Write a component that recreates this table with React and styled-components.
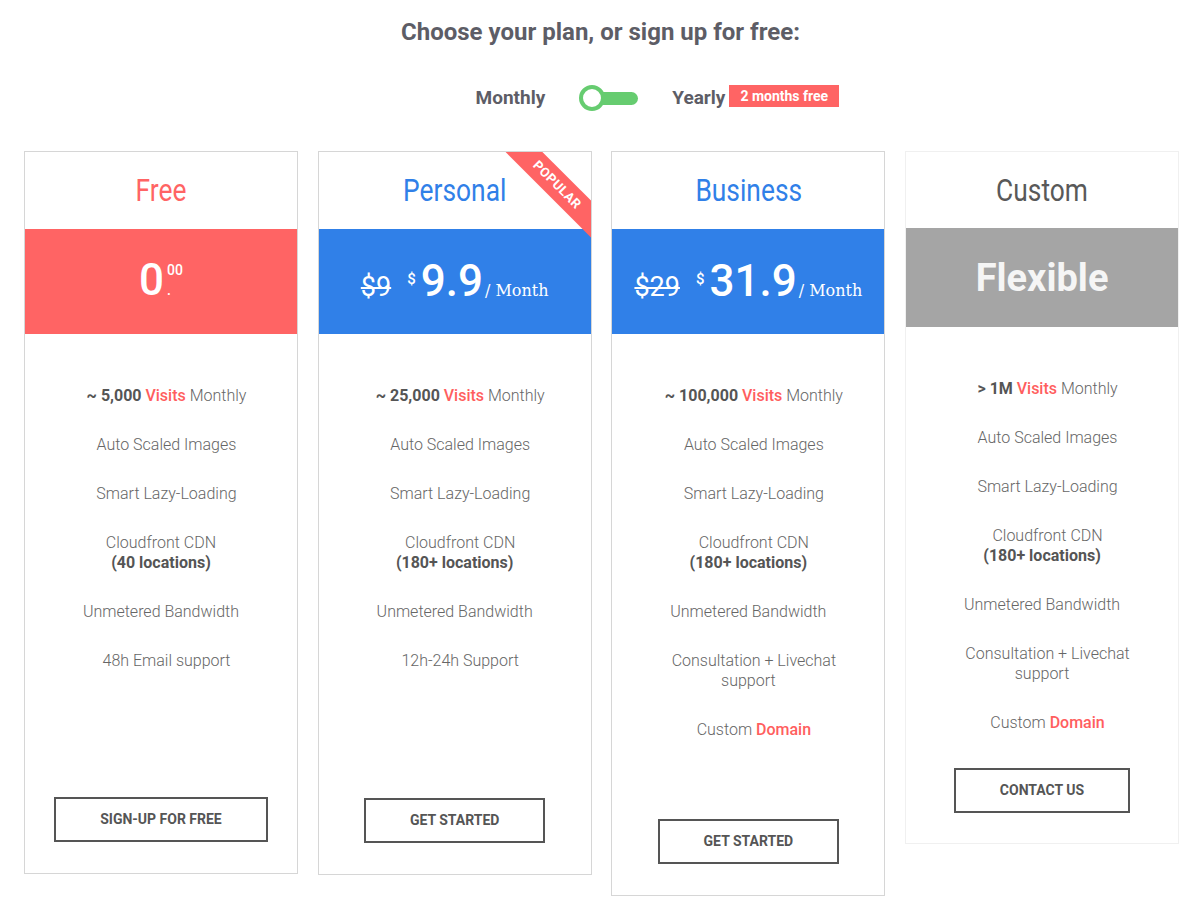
import React from 'react'
import styled, { createGlobalStyle } from 'styled-components'

const GlobalStyle = createGlobalStyle`
  body {
    margin: 0;
    background: #fff;
    font-family: Roboto, 'Liberation Sans', sans-serif;
  }
`

const Page = styled.div`
  width: 1201px;
  padding-top: 17px;
`

const Heading = styled.h2`
  margin: 0;
  text-align: center;
  font-size: 24px;
  line-height: 30px;
  font-weight: 700;
  color: #5d5d66;
`

const Billing = styled.div`
  display: flex;
  justify-content: center;
  align-items: center;
  gap: 34px;
  height: 26px;
  margin-top: 38px;
`

const Period = styled.span`
  position: relative;
  font-size: 19px;
  line-height: 26px;
  font-weight: 700;
  color: #5d5d66;
`

const Badge = styled.span`
  position: absolute;
  left: 100%;
  top: 0;
  margin-left: 4px;
  height: 22px;
  padding: 0 11px;
  background: #ff6464;
  color: #fff;
  font-size: 14px;
  line-height: 22px;
  white-space: nowrap;
`

const Switch = styled.span`
  position: relative;
  width: 59px;
  height: 26px;

  &::after {
    content: '';
    position: absolute;
    left: 10px;
    right: 0;
    top: 7px;
    height: 13px;
    border-radius: 7px;
    background: #66cc70;
  }

  &::before {
    content: '';
    position: absolute;
    z-index: 1;
    left: 0;
    top: 0;
    width: 26px;
    height: 26px;
    box-sizing: border-box;
    border-radius: 50%;
    border: 4px solid #66cc70;
    background: #fff;
  }
`

const Plans = styled.div`
  display: flex;
  justify-content: center;
  align-items: flex-start;
  gap: 19.7px;
  margin-top: 40px;
  padding-left: 2px;
`

const Card = styled.div`
  position: relative;
  overflow: hidden;
  width: 274px;
  box-sizing: border-box;
  display: flex;
  flex-direction: column;
  border: 1px solid ${p => (p.$muted ? '#f0f0f0' : '#d6d6d6')};
  padding-bottom: ${p => (p.$muted ? 30 : 31)}px;
  background: #fff;
`

const Header = styled.div`
  height: ${p => (p.$muted ? 76 : 77)}px;
  display: flex;
  align-items: center;
  justify-content: center;
`

const Title = styled.span`
  display: inline-block;
  font-size: 31px;
  font-weight: 400;
  color: ${p => p.$color};
  transform: scaleX(0.85);
`

const Band = styled.div`
  height: ${p => (p.$muted ? 99 : 105)}px;
  background: ${p => p.$color};
  display: flex;
  align-items: center;
  justify-content: center;
  color: #fff;
`

const Price = styled.div`
  white-space: nowrap;
  line-height: 44px;
  margin-top: 7px;
`

const Was = styled.s`
  font-size: 27px;
  font-weight: 400;
  margin-right: 16px;
  text-decoration-thickness: 2px;
`

const Currency = styled.span`
  font-size: 15px;
  font-weight: 500;
  vertical-align: 12px;
  margin-right: 5px;
`

const Amount = styled.span`
  font-size: 44px;
  font-weight: 500;
`

const Cents = styled.span`
  display: inline-block;
  font-size: 14px;
  line-height: 20px;
  font-weight: 500;
  text-align: left;
  margin-left: 3px;
`

const Per = styled.span`
  font-family: 'DejaVu Serif', 'Liberation Serif', serif;
  font-size: 16px;
  margin-left: 2px;
`

const Flexible = styled.span`
  font-size: 38px;
  font-weight: 700;
  color: #f5f5f5;
`

const Features = styled.ul`
  list-style: none;
  margin: 0;
  padding: 52px 0 0;
`

const Feature = styled.li`
  margin-bottom: 29px;
  text-align: center;
  font-size: 16px;
  line-height: 20px;
  font-weight: 300;
  color: #666;
`

const Lead = styled.span`
  display: inline-block;
  width: 11px;
`

const Strong = styled.b`
  font-weight: 700;
  color: #555;
`

const Accent = styled.span`
  font-weight: 500;
  color: #ff5e5e;
`

const Action = styled.button`
  align-self: center;
  margin-top: ${p => p.$space}px;
  padding: 13px 44px;
  border: 2px solid #555;
  background: #fff;
  color: #555;
  font-family: Roboto, 'Liberation Sans', sans-serif;
  font-size: 14px;
  line-height: 15px;
  font-weight: 700;
  text-transform: uppercase;
`

const Corner = styled.div`
  position: absolute;
  top: 0;
  right: 0;
  width: 90px;
  height: 90px;
  overflow: hidden;
  pointer-events: none;
`

const Ribbon = styled.div`
  position: absolute;
  left: -19px;
  top: 20px;
  width: 150px;
  height: 26px;
  background: #ff6464;
  color: #fff;
  font-size: 13px;
  font-weight: 700;
  line-height: 26px;
  letter-spacing: 0.5px;
  text-align: center;
  transform: rotate(45deg);
`

const RED = '#ff6464'
const BLUE = '#3080e8'

const visits = (amount) => (
  <>
    <Lead />
    <Strong>{amount}</Strong> <Accent>Visits</Accent> Monthly
  </>
)

const domain = (
  <>
    <Lead />
    Custom <Accent>Domain</Accent>
  </>
)

const plans = [
  {
    name: 'Free',
    titleColor: RED,
    band: RED,
    price: (
      <Price>
        <Amount>0</Amount>
        <Cents>00<br />.</Cents>
      </Price>
    ),
    features: [
      visits('~ 5,000'),
      <><Lead />Auto Scaled Images</>,
      <><Lead />Smart Lazy-Loading</>,
      <>Cloudfront CDN<br /><Strong>(40 locations)</Strong></>,
      <>Unmetered Bandwidth</>,
      <><Lead />48h Email support</>,
    ],
    action: 'Sign-up for free',
    space: 97,
  },
  {
    name: 'Personal',
    titleColor: BLUE,
    band: BLUE,
    popular: true,
    price: (
      <Price>
        <Was>$9</Was>
        <Currency>$</Currency>
        <Amount>9.9</Amount>
        <Per>/ Month</Per>
      </Price>
    ),
    features: [
      visits('~ 25,000'),
      <><Lead />Auto Scaled Images</>,
      <><Lead />Smart Lazy-Loading</>,
      <><Lead />Cloudfront CDN<br /><Strong>(180+ locations)</Strong></>,
      <>Unmetered Bandwidth</>,
      <><Lead />12h-24h Support</>,
    ],
    action: 'Get started',
    space: 98,
  },
  {
    name: 'Business',
    titleColor: BLUE,
    band: BLUE,
    price: (
      <Price>
        <Was>$29</Was>
        <Currency>$</Currency>
        <Amount>31.9</Amount>
        <Per>/ Month</Per>
      </Price>
    ),
    features: [
      visits('~ 100,000'),
      <><Lead />Auto Scaled Images</>,
      <><Lead />Smart Lazy-Loading</>,
      <><Lead />Cloudfront CDN<br /><Strong>(180+ locations)</Strong></>,
      <>Unmetered Bandwidth</>,
      <><Lead />Consultation + Livechat<br />support</>,
      domain,
    ],
    action: 'Get started',
    space: 50,
  },
  {
    name: 'Custom',
    titleColor: '#595959',
    band: '#a5a5a5',
    muted: true,
    price: <Flexible>Flexible</Flexible>,
    features: [
      visits('> 1M'),
      <><Lead />Auto Scaled Images</>,
      <><Lead />Smart Lazy-Loading</>,
      <><Lead />Cloudfront CDN<br /><Strong>(180+ locations)</Strong></>,
      <>Unmetered Bandwidth</>,
      <><Lead />Consultation + Livechat<br />support</>,
      domain,
    ],
    action: 'Contact us',
    space: 6,
  },
]

const PlanCard = ({ plan }) => (
  <Card $muted={plan.muted}>
    <Header $muted={plan.muted}>
      <Title $color={plan.titleColor}>{plan.name}</Title>
    </Header>
    <Band $color={plan.band} $muted={plan.muted}>{plan.price}</Band>
    <Features>
      {plan.features.map((f, i) => <Feature key={i}>{f}</Feature>)}
    </Features>
    <Action $space={plan.space}>{plan.action}</Action>
    {plan.popular && (
      <Corner>
        <Ribbon>POPULAR</Ribbon>
      </Corner>
    )}
  </Card>
)

const App = () => (
  <Page>
    <GlobalStyle />
    <Heading>Choose your plan, or sign up for free:</Heading>
    <Billing>
      <Period>Monthly</Period>
      <Switch />
      <Period>
        Yearly
        <Badge>2 months free</Badge>
      </Period>
    </Billing>
    <Plans>
      {plans.map(p => <PlanCard key={p.name} plan={p} />)}
    </Plans>
  </Page>
)

export default App
